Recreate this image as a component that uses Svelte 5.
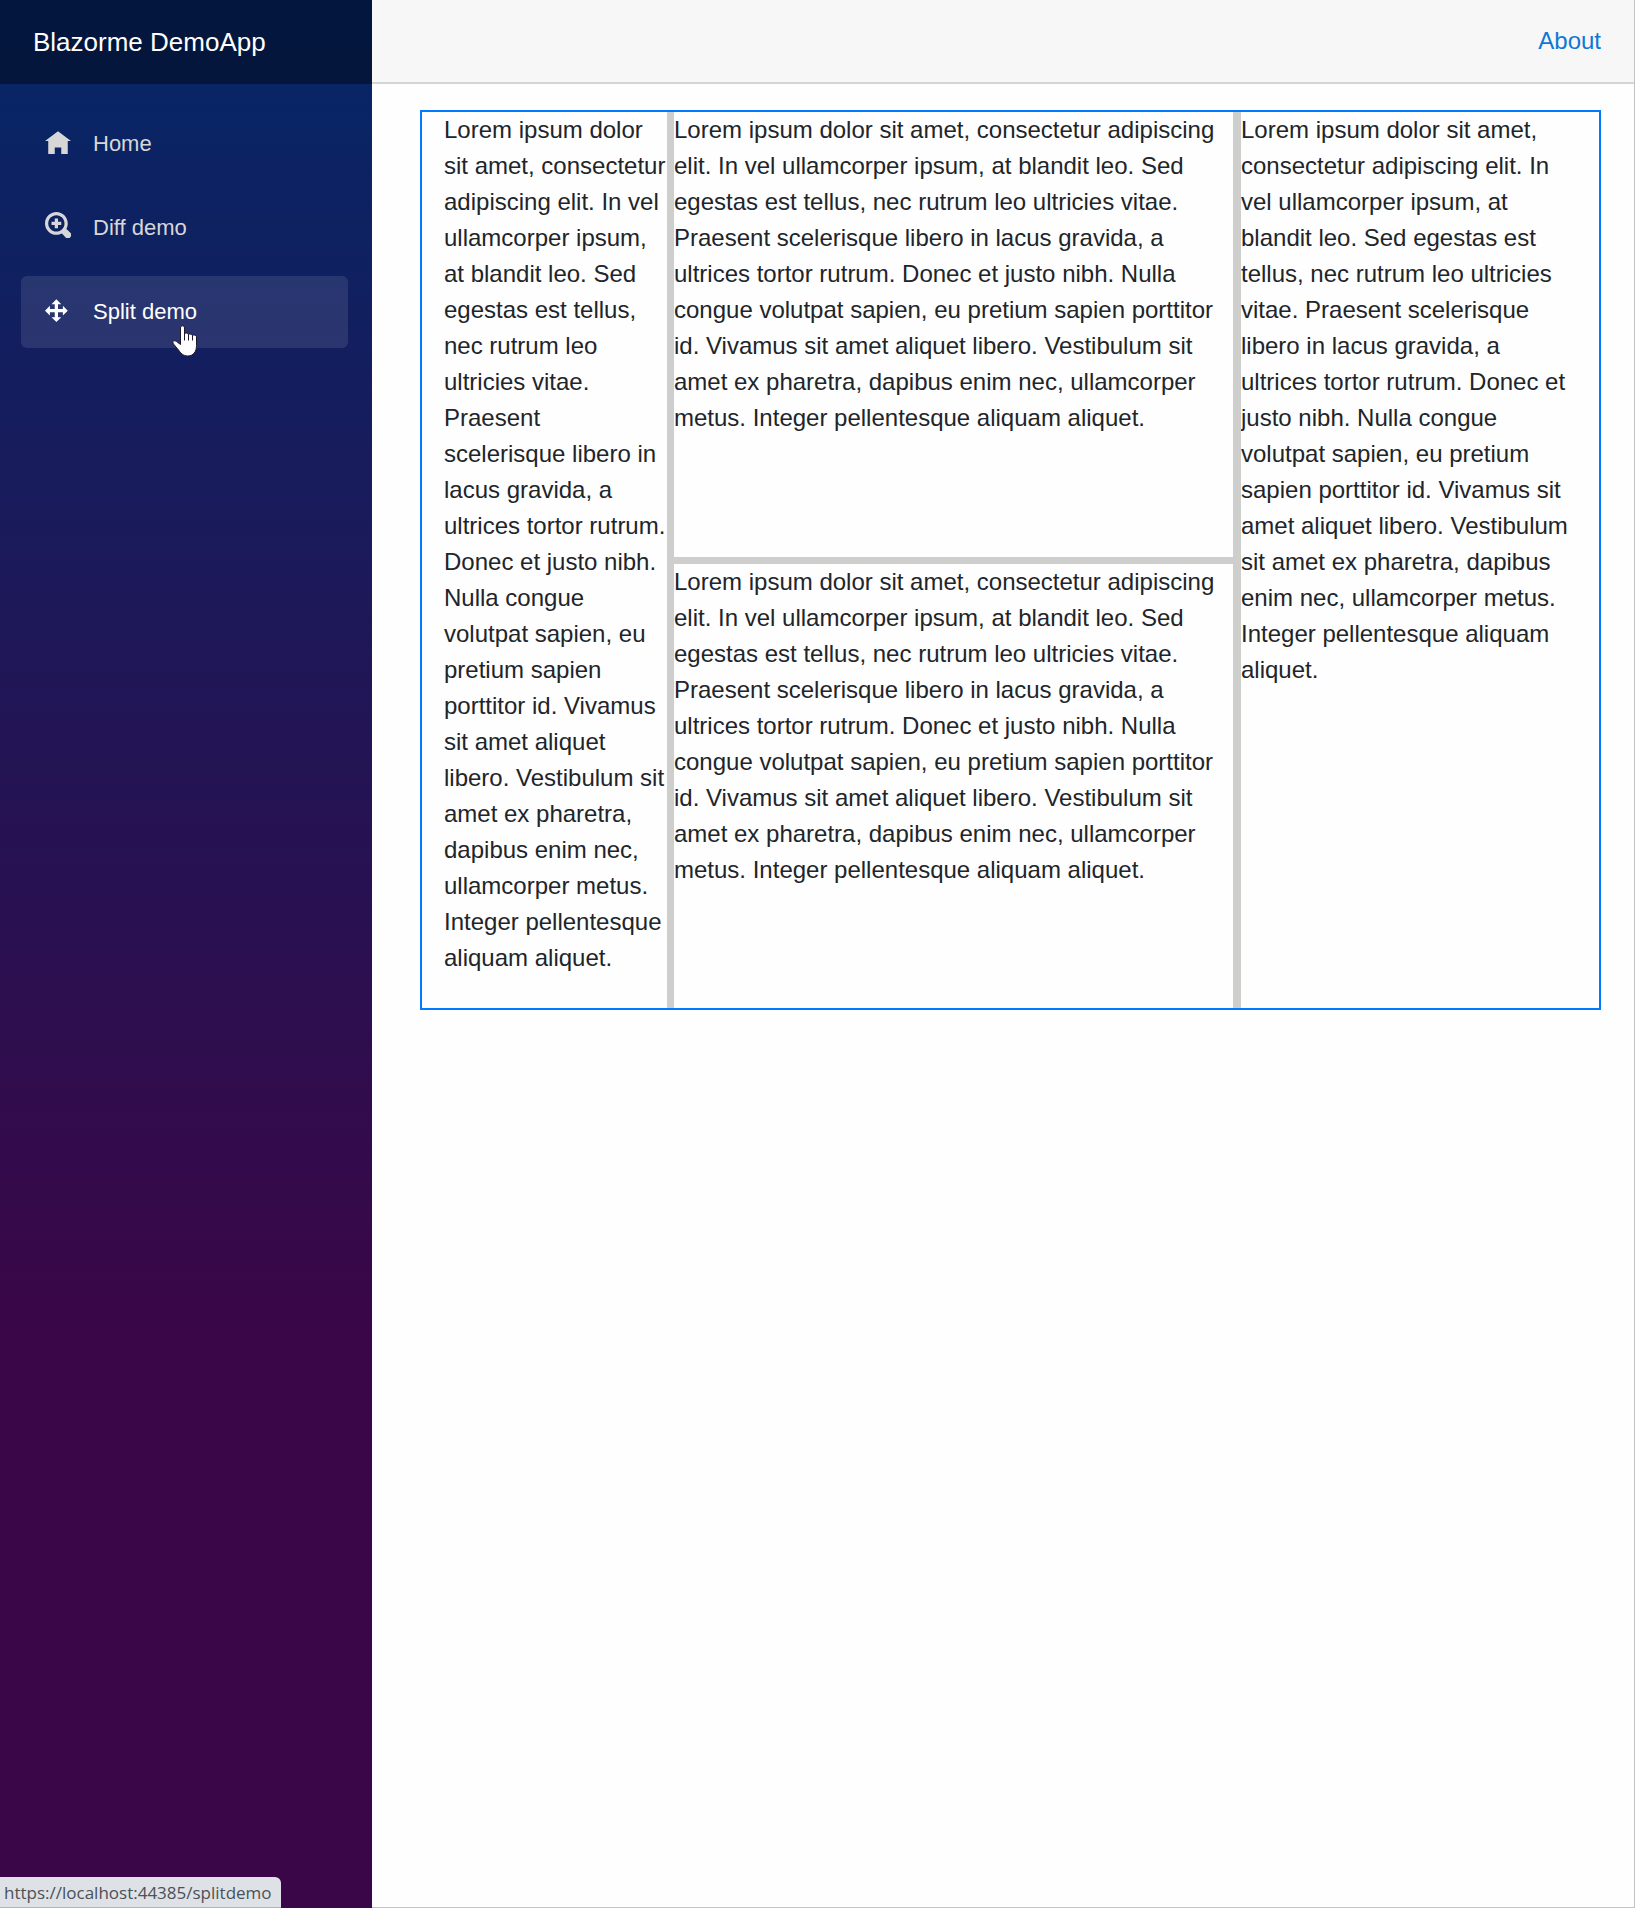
<script>
  const lorem =
    'Lorem ipsum dolor sit amet, consectetur adipiscing elit. In vel ullamcorper ipsum, at blandit leo. Sed egestas est tellus, nec rutrum leo ultricies vitae. Praesent scelerisque libero in lacus gravida, a ultrices tortor rutrum. Donec et justo nibh. Nulla congue volutpat sapien, eu pretium sapien porttitor id. Vivamus sit amet aliquet libero. Vestibulum sit amet ex pharetra, dapibus enim nec, ullamcorper metus. Integer pellentesque aliquam aliquet.';

  const links = [
    {
      label: 'Home',
      href: '#home',
      viewBox: '0 -1 8 8',
      path: 'M4 0l-4 3h1v4h2v-2h2v2h2v-4h1l-4-3z'
    },
    {
      label: 'Diff demo',
      href: '#diffdemo',
      viewBox: '0 0 8 8',
      path: 'M3.5 0c-1.93 0-3.5 1.57-3.5 3.5s1.57 3.5 3.5 3.5c.61 0 1.19-.15 1.69-.41a1 1 0 0 0 .09.13l1 1.02a1.02 1.02 0 1 0 1.44-1.44l-1.03-1a1 1 0 0 0-.13-.09c.27-.5.44-1.08.44-1.71 0-1.93-1.57-3.5-3.5-3.5zm0 1c1.39 0 2.5 1.11 2.5 2.5s-1.11 2.5-2.5 2.5-2.5-1.11-2.5-2.5 1.11-2.5 2.5-2.5zm-.5 1v1h-1v1h1v1h1v-1h1v-1h-1v-1h-1z'
    },
    {
      label: 'Split demo',
      href: '#splitdemo',
      viewBox: '0 -1 8 8',
      path: 'M3.5 0l-1.5 1.5h1v1.5h-1.5v-1l-1.5 1.5 1.5 1.5v-1h1.5v1.5h-1l1.5 1.5 1.5-1.5h-1v-1.5h1.5v1l1.5-1.5-1.5-1.5v1h-1.5v-1.5h1l-1.5-1.5z',
      active: true
    }
  ];
</script>

<div class="page">
  <aside class="sidebar">
    <header class="brand-row"><a class="brand" href="#home">Blazorme DemoApp</a></header>
    <nav class="nav">
      {#each links as link}
        <a class="nav-link" class:active={link.active} href={link.href} aria-current={link.active ? 'page' : undefined}>
          <svg class="icon" viewBox={link.viewBox} aria-hidden="true"><path d={link.path} /></svg>
          <span>{link.label}</span>
          {#if link.active}
            <svg class="pointer" viewBox="0 0 26 32" aria-hidden="true">
              <path d="M8.5 19.5V3c0-3 4-3 4 0v6.5c0-2 4-2 4 .5 0-1.5 4-1.5 4 1 0-1.500 4-1.500 4 1v8.500c0 6-3 10.500-9 10.500-4 0-7-3-9-6l-5-6c-2-3 1-4 3-2.500z" />
              <path class="crease" d="M12.5 9v6.500M16.5 10v5.500M20.5 11v4.500" />
            </svg>
          {/if}
        </a>
      {/each}
    </nav>
  </aside>

  <div class="main">
    <header class="top-row"><a class="about" href="#about">About</a></header>
    <main class="content">
      <div class="split">
        <section class="pane first">{lorem}</section>
        <div class="gutter" role="separator"></div>
        <div class="middle">
          <section class="pane">{lorem}</section>
          <div class="gutter" role="separator"></div>
          <section class="pane">{lorem}</section>
        </div>
        <div class="gutter" role="separator"></div>
        <section class="pane last">{lorem}</section>
      </div>
    </main>
  </div>

  <div class="status">https://localhost:44385/splitdemo</div>
</div>

<style>
  :global(body) {
    margin: 0;
    background: #fefefe;
  }

  .page {
    display: flex;
    min-height: 100vh;
    font-family: 'Liberation Sans', Arial, sans-serif;
    font-size: 24px;
    line-height: 36px;
    color: #212529;
  }

  a {
    text-decoration: none;
  }

  .sidebar {
    flex: 0 0 372px;
    background: linear-gradient(180deg, rgb(5, 39, 103) 0%, #3a0647 70%);
  }

  .brand-row {
    display: flex;
    align-items: center;
    height: 84px;
    padding-left: 33px;
    background: rgba(0, 0, 0, 0.4);
  }

  .brand {
    color: #fff;
    font-size: 26px;
  }

  .nav {
    display: flex;
    flex-direction: column;
    gap: 12px;
    padding: 24px 24px 24px 21px;
  }

  .nav-link {
    position: relative;
    display: flex;
    align-items: center;
    gap: 22px;
    height: 72px;
    padding: 0 24px;
    border-radius: 6px;
    color: #d7d7d7;
    font-size: 22px;
  }

  .nav-link.active {
    background: rgba(255, 255, 255, 0.1);
    color: #fff;
  }

  .icon {
    width: 26px;
    height: 26px;
    margin-bottom: 6px;
    fill: currentColor;
  }

  .pointer {
    position: absolute;
    left: 151px;
    top: 49px;
    width: 26px;
    height: 32px;
    fill: #fff;
    stroke: #1a1a2a;
    stroke-width: 1;
  }

  .crease {
    fill: none;
  }

  .main {
    flex: 1;
    min-width: 0;
    border-right: 1px solid #c4c4c4;
    border-bottom: 1px solid #c4c4c4;
  }

  .top-row {
    box-sizing: border-box;
    display: flex;
    align-items: center;
    justify-content: flex-end;
    height: 84px;
    padding-right: 33px;
    background: #f7f7f7;
    border-bottom: 2px solid #d6d5d5;
  }

  .about {
    color: #0f77d5;
  }

  .content {
    padding: 26px 33px 26px 48px;
  }

  .split {
    display: grid;
    grid-template-columns: 245fr 7px 559fr 8px 358fr;
    min-height: 896px;
    border: 2px solid #007bff;
  }

  .middle {
    display: grid;
    grid-template-rows: 1fr 7px 1fr;
  }

  .pane {
    min-width: 0;
    overflow: hidden;
  }

  .first {
    padding-left: 22px;
  }

  .last {
    padding-right: 22px;
  }

  .gutter {
    background: #cececd;
  }

  .status {
    position: fixed;
    left: 0;
    bottom: 0;
    padding: 2px 9px 0 4px;
    border-bottom: 1px solid #b4b4b4;
    border-top-right-radius: 6px;
    background: #dee1e6;
    color: #4a5157;
    font-family: 'Open Sans', 'Noto Sans', sans-serif;
    font-size: 17px;
    line-height: 28px;
  }
</style>
